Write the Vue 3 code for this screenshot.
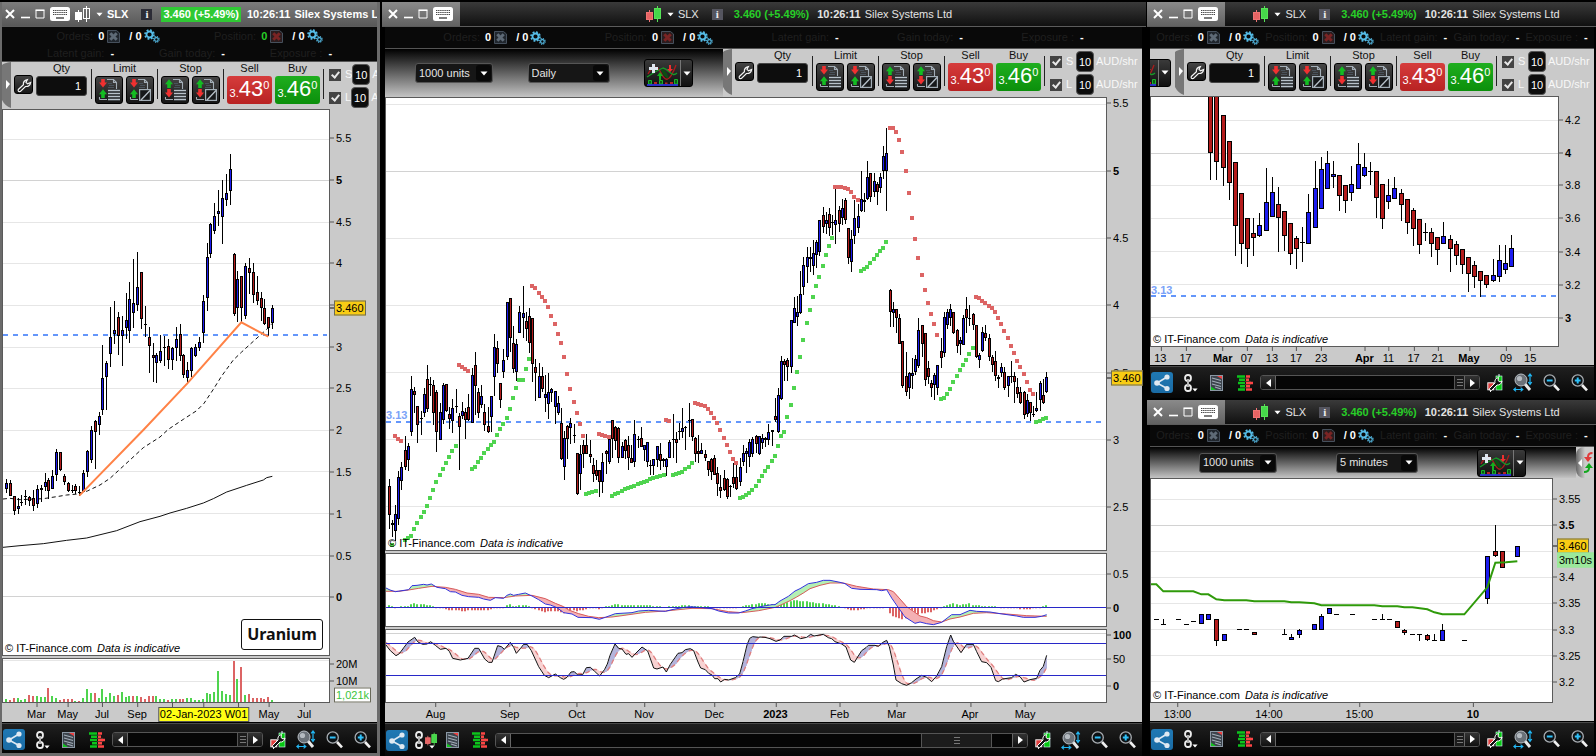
<template>
  <svg class="sprite" aria-hidden="true">
    <symbol id="close" viewBox="0 0 10 10"><path d="M1 1L9 9M9 1L1 9" stroke="#fff" stroke-width="2" /></symbol>
    <symbol id="min" viewBox="0 0 10 10"><path d="M1 8.5H10" stroke="#fff" stroke-width="1.6" /></symbol>
    <symbol id="max" viewBox="0 0 10 10"><path d="M1 1.5H9V9H1z" fill="none" stroke="#fff" /><path d="M.5 1.2H9.5" stroke="#fff" stroke-width="1.6" /></symbol>
    <symbol id="keyboard" viewBox="0 0 20 14">
      <rect width="20" height="14" rx="2.5" fill="#fff" />
      <path d="M3 3.5H17M3 5.5H17M3 7.5H17" stroke="#444" stroke-width="1.2" stroke-dasharray="1.4 .7" />
      <path d="M6 11H14" stroke="#444" stroke-width="1.4" />
    </symbol>
    <symbol id="candles" viewBox="0 0 15 16">
      <path d="M3.5 4V16" style="stroke: var(--one)" /><rect x=".5" y="6.5" width="6" height="7" style="fill: var(--one-in); stroke: var(--one)" />
      <path d="M11.5 0V16" style="stroke: var(--two)" /><rect x="8.5" y="2.5" width="6" height="10" style="fill: var(--two-in); stroke: var(--two)" />
    </symbol>
    <symbol id="caret" viewBox="0 0 8 5"><path d="M.5 .5H7.5L4 4.5z" fill="#fff" /></symbol>
    <symbol id="cancel" viewBox="0 0 13 13">
      <path d="M.5 .5H9.5L12.5 3V12.5H.5z" style="fill: var(--bg); stroke: #46505c" />
      <path d="M3.3 3.3L9.7 9.7M9.7 3.3L3.3 9.7" style="stroke: var(--x)" stroke-width="3" />
    </symbol>
    <symbol id="gears" viewBox="0 0 16 14">
      <circle cx="5.5" cy="5.5" r="3" fill="none" stroke="#56bde8" stroke-width="1.8" />
      <circle cx="5.5" cy="5.5" r="4.5" fill="none" stroke="#56bde8" stroke-width="1.6" stroke-dasharray="1.9 1.63" />
      <circle cx="12.4" cy="10.4" r="1.8" fill="none" stroke="#56bde8" stroke-width="1.1" />
      <circle cx="12.4" cy="10.4" r="2.8" fill="none" stroke="#56bde8" stroke-width="1.2" stroke-dasharray="1.2 1" />
    </symbol>
    <symbol id="wrench" viewBox="0 0 19 19">
      <path d="M3.3 13.5L8.4 8.7Q7.8 4.8 12.4 3.6L11 6.3L12.6 7.9L15.6 6.6Q15 10.8 10.4 10.5L5.4 15.5Q2.6 16.2 3.3 13.5z" fill="none" stroke="#f2f2f2" stroke-width="1.2" />
    </symbol>
    <symbol id="arrowDown" viewBox="0 0 8 9"><path d="M2.2 0H5.8V3.6H8L4 8.6L0 3.6H2.2z" fill="#f03030" /></symbol>
    <symbol id="arrowUp" viewBox="0 0 8 9"><path d="M2.2 9H5.8V5.2H8L4 .2L0 5.2H2.2z" fill="#14bc22" /></symbol>
    <symbol id="paper" viewBox="0 0 28 28">
      <path d="M12 3.5H18.5L21.5 6.5V13M18.5 3.5V6.5H21.5M4.5 23.5H12M4.5 23.5V21" fill="none" stroke="#a2adb6" stroke-width="1.1" />
      <path d="M13 7.5H17M14 9.5H19M13 11.5H19" stroke="#4a535c" />
    </symbol>
    <symbol id="list" viewBox="0 0 12 12"><rect width="12" height="12" fill="#1c1f22" /><path d="M0 1.5H12M0 4.5H12M0 7.5H12M0 10.5H12" stroke="#b8c2ca" stroke-width="1.6" /></symbol>
    <symbol id="slope" viewBox="0 0 12 12"><rect x=".6" y=".6" width="10.8" height="10.8" fill="#16181a" stroke="#a2adb6" stroke-width="1.2" /><path d="M2 11L11 1.5" stroke="#b8c2ca" stroke-width="1.3" /></symbol>
    <symbol id="indicator" viewBox="0 0 35 28">
      <path d="M3 14C8 5 12 5 16 13S24 24 31 5" fill="none" stroke="#a81c1c" stroke-width="1.4" />
      <path d="M2 17C9 12 13 10 18 8C24 9 27 18 32 13" fill="none" stroke="#159a28" stroke-width="1.3" />
      <path d="M16 10C19 9 21 11 24 18C20 19 18 14 16 10z" fill="#0c4d12" />
      <path d="M14 20V16H12L15 12L18 16H16V20z" fill="#12b21e" />
      <path d="M24 5H26V9H28L25 12L22 9H24z" fill="#ee3030" />
      <path d="M7 4H10V7H13V10H10V13H7V10H4V7H7z" fill="#dfe6ef" />
      <path d="M3.5 20.5H6.5V24H3.5zM14.5 20.5H17.5V24H14.5zM29.5 19.5H32.5V24H29.5z" fill="#0a5c12" stroke="#19b42b" />
      <path d="M9 22H12V24H9zM20 22.5H22.5V24H20zM25 22H28V24H25z" fill="#b82222" />
      <path d="M2 25H33" stroke="#3338ff" stroke-width="1.4" />
    </symbol>
    <symbol id="share" viewBox="0 0 22 21">
      <path d="M16 5L6 11L16 16.5" fill="none" stroke="#dfe9f2" stroke-width="1.6" />
      <circle cx="16" cy="5" r="2.6" fill="#dfe9f2" /><circle cx="6" cy="11" r="2.8" fill="#dfe9f2" /><circle cx="16" cy="16.5" r="2.6" fill="#dfe9f2" />
    </symbol>
    <symbol id="chain" viewBox="0 0 8 18">
      <rect x="1.1" y="1" width="5.8" height="6" rx="2.6" fill="none" stroke="#ececec" stroke-width="1.9" />
      <rect x="1.1" y="11" width="5.8" height="6" rx="2.6" fill="none" stroke="#ececec" stroke-width="1.9" />
      <path d="M4 5V13" stroke="#b4b4b4" stroke-width="2" />
    </symbol>
    <symbol id="report" viewBox="0 0 13 16">
      <rect x=".5" y=".5" width="12" height="15" fill="#3c444d" stroke="#8b98a5" />
      <path d="M2 3L11 5.5M2 6L11 8.5M2 9L11 11.5M5 12L11 14" stroke="#a2adb8" stroke-width="1.2" />
      <path d="M7 1H12V4z" fill="#f04040" /><path d="M1 15V11.5L6 15z" fill="#12c41e" />
    </symbol>
    <symbol id="depth" viewBox="0 0 16 16">
      <path d="M0 1.5H8M2 4.8H8M1 8H8M3 11.2H8M1 14.5H8" stroke="#0cc41c" stroke-width="2.6" />
      <path d="M9 1.5H13M9 4.8H12M9 8H16M9 11.2H13M9 14.5H15" stroke="#ff4545" stroke-width="2.6" />
      <path d="M8 3.2H12M8 6.4H14M8 9.600H14M8 12.8H13" stroke="#8a4a40" stroke-width=".6" />
    </symbol>
    <symbol id="setup" viewBox="0 0 16 18">
      <rect x=".8" y="8.8" width="6" height="7" fill="#e04040" stroke="#eee" /><path d="M3.5 14V18" stroke="#eee" />
      <rect x="9" y="2" width="6" height="14" fill="#07c813" stroke="#dff" stroke-width=".6" /><path d="M12 0V3" stroke="#dff" />
      <path d="M2.5 14.5L8 9Q7 5 11.5 3.5L11 6.5L13 8L15 7Q14 11.5 10 11L4.5 16.5Q2 17 2.5 14.5z" fill="#111" stroke="#fff" />
    </symbol>
    <symbol id="fit" viewBox="0 0 20 19">
      <path d="M12 11L17 17" stroke="#e8e8e8" stroke-width="3" /><circle cx="8" cy="7" r="6" fill="#6b7178" stroke="#b8bec4" />
      <circle cx="6.5" cy="5.5" r="2.6" fill="#b4bac0" />
      <path d="M17 2V10M15.2 3.4L17 1L18.8 3.4M15.2 9L17 11.4L18.8 9M1 16.5H9M3 14.6L.8 16.5L3 18.4M7.6 14.6L9.8 16.5L7.6 18.4" fill="none" stroke="#22b7f4" stroke-width="1.2" />
    </symbol>
    <symbol id="minus" viewBox="0 0 18 18">
      <path d="M11 11L16 16.4" stroke="#f0f0f0" stroke-width="2.6" /><circle cx="6.7" cy="6.5" r="5.6" fill="#0c1114" stroke="#a8adb2" stroke-width="1.3" />
      <path d="M3.8 6.5H9.6" stroke="#2fc0f8" stroke-width="2" />
    </symbol>
    <symbol id="plus" viewBox="0 0 18 18">
      <path d="M11 11L16 16.4" stroke="#f0f0f0" stroke-width="2.6" /><circle cx="6.7" cy="6.5" r="5.6" fill="#0c1114" stroke="#a8adb2" stroke-width="1.3" />
      <path d="M3.8 6.5H9.6M6.7 3.6V9.4" stroke="#2fc0f8" stroke-width="2" />
    </symbol>
    <symbol id="swap" viewBox="0 0 9 21">
      <path d="M8.5 1Q4 1 4 5" fill="none" stroke="#e03c3c" stroke-width="2" /><path d="M0 5H8L4 10z" fill="#e03c3c" />
      <path d="M0 20Q5 20 5 16" fill="none" stroke="#12a81e" stroke-width="2" /><path d="M1 16H9L5 11z" fill="#12a81e" />
    </symbol>
  </svg>

  <main class="desk">
    <div v-for="(column, c) in columns" :key="c" class="column" :class="'column-' + c">
      <section v-for="win in column" :key="win.id" class="window" :class="win.id">
        <!-- title bar -->
        <header class="title">
          <div class="controls">
            <button aria-label="Close"><svg width="10" height="10"><use href="#close" /></svg></button>
            <button aria-label="Minimize"><svg width="10" height="10"><use href="#min" /></svg></button>
            <button aria-label="Maximize"><svg width="10" height="10"><use href="#max" /></svg></button>
            <button aria-label="Keyboard"><svg width="20" height="14"><use href="#keyboard" /></svg></button>
          </div>
          <div class="head">
            <svg class="symbol-icon" width="15" height="16"><use href="#candles" /></svg>
            <svg class="caret" width="7" height="5"><use href="#caret" /></svg>
            <span class="ticker">SLX</span>
            <b class="about">i</b>
            <b class="quote">3.460 (+5.49%)</b>
            <b class="clock">10:26:11</b>
            <span class="company">Silex Systems Ltd</span>
          </div>
        </header>

        <div class="body">
          <!-- orders / position summary -->
          <div class="info">
            <div class="info-row">
              <div v-for="name in ['Orders', 'Position']" :key="name" class="stat" :class="name.toLowerCase()">
                <span class="dim">{{ name }}:</span>
                <b class="count">0</b>
                <svg width="13" height="13"><use href="#cancel" /></svg>
                <b class="auto">/ 0</b>
                <svg width="16" height="14"><use href="#gears" /></svg>
              </div>
            </div>
            <div class="info-row">
              <div v-for="name in ['Latent gain:', 'Gain today:', 'Exposure :']" :key="name" class="stat">
                <span class="dim">{{ name }}</span><b class="dash">-</b>
              </div>
            </div>
          </div>

          <!-- tools -->
          <div class="tools">
            <div v-if="win.indicators" class="chart-tools">
              <template v-if="win.period">
                <span class="pick units">
                  <select :aria-label="'Units ' + win.id"><option>1000 units</option></select>
                  <i><svg width="8" height="5"><use href="#caret" /></svg></i>
                </span>
                <span class="pick period">
                  <select :aria-label="'Period ' + win.id"><option>{{ win.period }}</option></select>
                  <i><svg width="8" height="5"><use href="#caret" /></svg></i>
                </span>
              </template>
              <div class="add">
                <button aria-label="Add indicator"><svg width="35" height="28"><use href="#indicator" /></svg></button>
                <button aria-label="Indicator list"><svg width="8" height="5"><use href="#caret" /></svg></button>
              </div>
            </div>
            <div v-if="win.orders" class="order">
              <div class="notch"><svg width="12" height="46"><path d="M0 3Q2 1 9 0V46Q3 44 0 38z" fill="#777" /><path d="M4 18L8 22L4 27z" fill="#fff" /></svg></div>
              <button class="dark wrench" aria-label="Settings"><svg width="19" height="19"><use href="#wrench" /></svg></button>
              <div class="field qty-field">
                <label :for="'qty-' + win.id">Qty</label>
                <input :id="'qty-' + win.id" class="qty" value="1" />
              </div>
              <hr />
              <template v-for="kind in ['Limit', 'Stop']" :key="kind">
                <div class="field">
                  <span>{{ kind }}</span>
                  <div class="pair">
                    <button v-for="shape in ['list', 'slope']" :key="shape" class="dark" :aria-label="kind + ' ' + shape">
                      <svg width="26" height="26" viewBox="1 1 26 26">
                        <use href="#paper" width="28" height="28" />
                        <use :href="kind === 'Limit' ? '#arrowDown' : '#arrowUp'" x="4" y="3" width="8" height="9" />
                        <use :href="kind === 'Limit' ? '#arrowUp' : '#arrowDown'" x="4" y="13" width="8" height="9" />
                        <use :href="'#' + shape" x="13" y="13" width="12" height="12" />
                      </svg>
                    </button>
                  </div>
                </div>
                <hr />
              </template>
              <div class="field">
                <span>Sell</span>
                <button class="deal sell"><small>3.</small>43<sup>0</sup></button>
              </div>
              <div class="field buy-field">
                <span>Buy</span>
                <button class="deal buy"><small>3.</small>46<sup>0</sup></button>
              </div>
              <hr />
              <div class="stops">
                <div v-for="side in ['S', 'L']" :key="side" class="stop">
                  <input :id="side + win.id" type="checkbox" checked />
                  <label :for="side + win.id">{{ side }}</label>
                  <input class="dist" value="10" :aria-label="side + ' distance'" />
                  <span>AUD/shr</span>
                </div>
              </div>
            </div>
            <button v-else class="unfold" aria-label="Show order panel">
              <svg width="6" height="8"><path d="M5 0V8L1 4z" fill="#fff" /></svg>
              <svg width="9" height="21"><use href="#swap" /></svg>
            </button>
          </div>

          <!-- charts -->
          <div class="charts">
            <template v-for="(plot, p) in win.plots" :key="p">
              <div class="plot">
                <svg width="100%" :height="plot.box[3] / 3" :viewBox="plot.box.join(' ')" preserveAspectRatio="none">
                  <path v-for="m in plot.marks" :key="m[0]" :d="`M${plot.box[0]} ${middle(m[0])}h${plot.box[2]}`" class="grid" :class="{ strong: m[2] }" />
                  <path v-for="(s, i) in plot.shapes" :key="i" :d="s.d" :class="s.cls" />
                  <path v-if="plot.level" :d="`M${plot.box[0]} ${plot.level}h${plot.box[2] - 6}`" class="level" />
                  <template v-if="plot.candles">
                    <path :d="plot.candles.wick" class="wick" />
                    <path :d="plot.candles.up" class="up" />
                    <path :d="plot.candles.down" class="down" />
                    <path :d="plot.candles.flat" class="flat" />
                  </template>
                  <path v-for="(s, i) in plot.over" :key="'o' + i" :d="s.d" :class="s.cls" />
                </svg>
                <span v-if="plot.note" class="level-note" :style="{ top: share(plot.note, plot.box, 1) }">3.13</span>
                <div v-if="p === 0" class="credit">© IT-Finance.com <em>Data is indicative</em></div>
                <div v-if="plot.stamp" class="stamp">{{ plot.stamp }}</div>
              </div>
              <div class="scale">
                <span v-for="m in plot.marks.filter((k) => k[1])" :key="m[0]" class="mark" :class="{ strong: m[2] }" :style="{ top: `max(6px, ${share(m[0], plot.box, 1)})` }">{{ m[1] }}</span>
                <span v-for="t in plot.tags" :key="t[1]" class="mark tag" :class="t[2]" :style="{ top: share(t[0], plot.box, 1) }">{{ t[1] }}</span>
              </div>
            </template>
            <div class="dates">
              <span v-for="d in win.dates" :key="d[0]" class="date" :class="d[2]" :style="{ left: share(d[0], win.plots[0].box, 0) }">{{ d[1] }}</span>
            </div>
          </div>

          <!-- bottom bar -->
          <footer class="bar">
            <button class="share" aria-label="Share"><svg width="22" height="21"><use href="#share" /></svg></button>
            <button class="link" aria-label="Link windows">
              <svg width="8" height="18"><use href="#chain" /></svg>
              <svg v-if="win.linked" class="symbol-icon" width="12" height="16"><use href="#candles" /></svg>
              <svg class="tiny" width="6" height="4"><use href="#caret" /></svg>
            </button>
            <button class="report" aria-label="Report"><svg width="13" height="16"><use href="#report" /></svg></button>
            <button class="depth" aria-label="Depth"><svg width="16" height="16"><use href="#depth" /></svg></button>
            <div class="scroll">
              <button aria-label="Back"><svg width="5" height="8"><path d="M5 0V8L0 4z" fill="#fff" /></svg></button>
              <span class="track"><span class="thumb" :class="{ wide: win.linked }"><i></i></span></span>
              <button aria-label="Forward"><svg width="5" height="8"><path d="M0 0V8L5 4z" fill="#fff" /></svg></button>
            </div>
            <button aria-label="Chart settings"><svg width="16" height="18"><use href="#setup" /></svg></button>
            <button aria-label="Fit"><svg width="20" height="19"><use href="#fit" /></svg></button>
            <button aria-label="Zoom out"><svg width="18" height="18"><use href="#minus" /></svg></button>
            <button aria-label="Zoom in"><svg width="18" height="18"><use href="#plus" /></svg></button>
          </footer>
        </div>
      </section>
    </div>
  </main>
</template>

<script setup>
// all plot coordinates are in thirds of a pixel
const snap = (v) => Math.round(v / 3) * 3;
const middle = (v) => Math.floor(v / 3) * 3 + 1.5;

// "x high top bottom low kind", kind is u (up), d (down) or n (flat)
const rows = (text, dx = 0, dy = 0) =>
  text.trim().split(/[\n;]+/).filter((t) => t.trim()).map((t) => {
    const [x, hi, top, bot, lo, kind] = t.trim().split(' ');
    return { x: middle(x) + dx, hi: +hi + dy, top: +top + dy, bot: +bot + dy, lo: +lo + dy, kind };
  });

const candles = (list, half = 3) => {
  const out = { wick: '', up: '', down: '', flat: '' };
  list.forEach((k) => {
    out.wick += `M${k.x} ${snap(k.hi)}V${snap(k.lo)}`;
    const top = snap(k.top);
    if (k.kind === 'n') {
      out.flat += `M${k.x - half - 1.5} ${top + 1.5}h${half * 2 + 3}`;
      return;
    }
    const height = Math.max(snap(k.bot) - top - 3, 3);
    out[k.kind === 'u' ? 'up' : 'down'] += `M${k.x - half} ${top + 1.5}h${half * 2}v${height}h${-half * 2}z`;
  });
  return out;
};

const points = (text, dx = 0, dy = 0) =>
  text.trim().split(/\s+/).map((t) => {
    const [x, y] = t.split(',');
    return [+x + dx, +y + dy];
  });
const line = (pts) => 'M' + pts.map((p) => p.join(' ')).join('L');
const dots = (pts) => pts.map(([x, y]) => `M${snap(x) - 6} ${snap(y) - 6}h12v12h-12z`).join('');

// linear interpolation inside a curve
const at = (pts, x) => {
  if (x <= pts[0][0]) return pts[0][1];
  for (let i = 1; i < pts.length; i++) {
    if (x <= pts[i][0]) {
      const [x0, y0] = pts[i - 1];
      const [x1, y1] = pts[i];
      return y0 + ((y1 - y0) * (x - x0)) / (x1 - x0 || 1);
    }
  }
  return pts[pts.length - 1][1];
};

// area between two curves, split by which one is higher
const between = (a, b, end) => {
  const out = ['', ''];
  for (let x = 12; x < end; x += 3) {
    const ya = at(a, x);
    const yb = at(b, x);
    out[ya < yb ? 0 : 1] += `M${x} ${ya.toFixed(1)}h3V${yb.toFixed(1)}h-3z`;
  }
  return out;
};

const share = (v, box, axis) => ((v - box[axis]) / box[axis + 2]) * 100 + '%';

/* weekly */
const weekly = [
  ...rows(`
19 162 175 191 203 u;31 165 175 212 214 d;43 213 213 258 269 d;55 218 243 253 266 u;64 210 231 236 242 n;76 194 214 218 240 n
88 213 216 228 242 d;100 196 220 242 258 d;112 180 192 236 250 u;124 180 189 195 232 u;136 144 171 186 198 u;145 160 165 197 222 d
157 135 153 191 192 u;169 72 80 149 167 u;181 80 82 135 138 d;193 147 153 170 179 d;205 171 175 197 200 d;217 180 195 197 204 n
226 178 184 198 207 d;238 182 200 203 212 n;250 135 144 200 200 u;262 75 78 140 156 u;274 3 15 104 115 u;286 -15 -12 22 131 d`, 0, 975),
  ...rows(`
298 936 948 974 1005 u;307 735 834 930 945 u;319 783 789 830 930 u;331 620 711 762 800 u;343 603 690 703 732 u;355 636 651 708 765 d
367 648 690 707 798 u;379 578 660 684 717 u;388 546 597 692 728 u;400 477 609 639 684 u;412 456 561 615 633 u;424 516 516 656 687 d
436 618 672 675 711 n;448 681 711 738 820 d;460 729 765 774 845 d;469 759 765 789 848 u;481 705 753 783 789 u;493 708 741 744 797 n
505 717 738 780 807 d;517 741 744 780 810 u;529 681 717 743 784 u;541 672 702 767 782 d;550 762 765 825 833 d;562 786 810 833 848 u
574 741 744 813 831 u;586 732 741 767 772 u;598 711 726 743 753 u;610 585 603 699 729 u;622 429 471 594 633 u;631 368 372 462 474 u
643 309 348 393 402 u;655 270 333 342 378 u;667 240 294 351 432 u;679 222 279 300 318 u;691 162 207 273 315 u;703 459 462 641 648 d
712 513 537 624 666 u;724 528 528 624 666 d;736 489 498 648 657 u;748 474 504 519 582 d;760 489 516 585 609 d;772 528 576 603 615 d
784 576 594 624 663 d;793 596 624 672 675 d;805 650 651 684 708 d;817 615 624 669 687 u`),
];
const average = points('9,1197 30,1195 60,1199 130,1196 170,1190 200,1185 235,1182 262,1173 300,1155 330,1135 355,1112 390,1080 430,1043 480,1011 505,988 550,958 590,932 612,910 640,868 665,828 700,780 725,756 760,724 800,688 817,670');
const slow = points('9,367 60,362 130,356 200,346 260,339 350,317 420,290 480,274 510,264 560,250 610,234 640,221 680,201 740,181 790,165 800,158 817,154', 0, 975);
const trend = points('238,1187 430,990 562,850 724,667 805,710');

const volume = `18,822g 30,825r 42,819r 54,819g 64,825g 75,822g 87,810r 99,813r 111,813g 124,816g 135,816g 144,789r 157,813g 169,819g 181,825r 193,822r
205,822r 217,822r 226,828g 238,828r 250,819g 261,792g 273,804g 285,804r 297,819g 306,792g 319,816g 330,804g 342,813g 354,810r 366,801g 378,816g
388,813g 400,813r 411,813g 424,816r 436,822r 448,813r 460,813r 469,813g 481,822g 492,822g 504,825r 516,822g 529,822g 541,822r 550,822r 562,819g
574,819g 586,825g 598,825g 610,822g 621,804g 630,807g 642,801g 654,738g 666,798g 678,807g 690,810g 702,708r 711,762g 723,726r 735,810g 747,807r
759,819r 771,819r 783,819r 793,822r 804,816r 817,825g`.split(/\s+/);
const volumeBars = (color) =>
  volume.filter((v) => v.endsWith(color)).map((v) => {
    const [x, y] = v.slice(0, -1).split(',');
    return `M${snap(+x) - 3} ${y}h6V831h-6z`;
  }).join('');

/* daily */
const daily = [
  ...rows(`
22 717 739 824 866 d;31 840 848 854 890 d;40 795 822 872 903 u;49 693 711 836 854 u;58 666 680 723 750 u;70 588 630 680 690 d
79 609 618 659 692 u;88 408 447 575 587 u;97 441 453 464 518 d;106 498 498 554 608 d;118 513 535 539 585 n;127 444 462 518 530 u
136 375 417 506 515 d;145 410 432 435 467 n;154 420 436 518 555 d;163 450 455 575 635 d;175 489 517 599 599 u;184 430 436 539 551 u
193 432 433 513 515 d;202 500 523 538 566 d;211 477 505 543 578 u;223 447 498 502 518 n;232 520 528 560 690 d;241 485 514 528 538 u
250 505 516 540 597 d;259 462 502 540 543 d;271 384 405 548 548 u;280 336 376 438 524 d;289 445 457 518 535 d;298 435 469 494 503 u
307 491 517 555 573 d;319 502 558 575 579 d;328 467 469 530 576 u;337 283 322 412 467 u;346 304 325 371 400 d;355 429 430 479 503 d
364 327 361 395 413 u;376 185 187 352 360 u;385 174 175 293 337 d;394 258 310 388 398 d;403 298 313 395 423 u;412 199 217 278 278 u
424 138 220 233 293 u;433 217 244 266 302 d;442 205 229 310 338 d;451 233 235 373 425 d;460 358 382 398 483 d;472 368 409 475 475 u
481 380 409 446 457 d;490 406 462 475 515 u;499 399 457 491 536 u;508 444 447 459 487 u;520 453 454 500 551 u;529 468 490 518 524 u
538 503 549 656 659 d;547 572 595 680 719 u;556 555 558 598 657 d;565 534 548 563 611 u;577 552 586 590 608 n;586 640 640 761 764 d
595 614 643 701 750 u;604 600 616 641 683 d;613 583 616 641 643 d;625 600 641 652 668 d;634 655 675 701 727 d;643 660 691 707 719 d
652 690 690 727 770 d;661 640 667 727 758 u;673 629 634 641 701 d;682 595 598 665 672 u;691 541 541 598 655 d;700 558 560 602 629 d
709 560 565 655 668 d;721 605 619 655 655 u;730 598 601 632 656 d;739 589 616 653 690 d;748 614 653 668 669 d;757 541 583 665 680 u
769 587 598 601 623 n;778 562 595 620 621 d;787 614 615 629 662 u;796 605 607 665 680 u;805 660 676 680 704 n;814 658 658 677 704 u
826 618 618 660 680 u;835 610 643 664 690 d;844 655 658 664 680 d;853 655 658 680 707 u;862 600 606 654 655 u;874 522 597 600 655 n
883 575 598 608 668 d;892 550 573 577 600 n;901 503 563 577 595 u;910 558 560 564 629 n;922 489 540 543 590 n;931 536 537 590 602 d
940 592 595 643 665 d;949 585 632 641 668 d;958 610 631 641 641 u;970 630 641 653 662 d;979 662 664 690 707 d;988 653 656 695 719 d
997 645 655 704 704 d;1006 680 700 731 767 d;1015 704 740 752 773 d;1027 690 715 749 752 d;1036 715 716 770 776 d;1045 735 737 740 770 n
1054 670 711 731 745 d;1063 675 712 748 749 d;1075 655 680 727 738 u;1084 615 640 665 678 u;1093 625 632 641 700 u;1102 597 606 652 680 u
1111 590 597 641 652 u;1123 585 589 613 640 d;1132 587 589 641 645 u`, 0, 420),
  ...rows(`
7 1003 1015 1030 1047 u;16 1010 1014 1021 1040 d;25 973 996 1021 1034 u;37 990 991 997 1037 d;46 895 948 960 967 d;55 863 886 997 998 u
64 768 784 898 900 u;73 778 784 796 842 d;82 775 781 802 843 d;94 660 661 802 820 u;103 591 625 668 670 u;112 588 637 650 678 u
121 514 583 638 642 u;130 471 496 562 586 u;142 441 472 502 550 u;151 440 472 478 516 u;160 420 460 497 525 u;169 420 427 464 503 u
178 360 361 455 467 u;190 320 346 380 398 d;199 335 361 373 403 u;208 324 343 385 408 d;217 345 367 371 405 n;226 262 361 374 432 u
238 318 331 373 395 d;247 298 325 355 375 u;256 294 301 361 372 d;265 384 385 473 492 d;274 390 418 485 516 u;283 300 355 409 432 u
295 313 349 385 400 u;304 213 298 334 335 u;313 280 300 307 335 u;322 183 232 296 300 u;331 220 220 290 307 d;343 220 244 275 290 u
352 245 253 275 315 d;361 218 232 263 280 u;370 138 169 214 237 u;379 84 160 214 333 u;391 567 571 637 682 d;400 607 628 638 682 u
409 627 628 654 700 d;418 642 655 731 731 d;427 722 724 857 865 d;439 757 829 875 887 d;448 815 820 865 897 u;457 775 820 829 868 u
466 765 778 815 825 u;475 655 691 797 803 u;487 675 676 731 772 d;496 699 700 839 857 d;505 784 805 830 852 d;514 840 850 865 890 d
523 818 826 854 900 u;532 795 796 865 885 u;544 714 753 773 804 d;553 636 652 758 770 u;562 627 637 674 686 u;571 612 628 653 679 u
580 635 637 700 702 d;592 687 690 737 758 d;601 712 721 733 765 u;610 646 655 734 735 u;619 590 628 655 699 d;628 615 655 658 678 n
640 640 643 674 690 d;649 676 676 770 773 d;658 758 766 779 804 u;667 680 697 754 755 u;676 676 700 713 723 d;688 702 715 770 782 d
697 765 772 794 815 d;706 754 784 827 844 d;715 824 832 838 863 u;724 790 802 818 830 u;733 800 815 863 870 d;745 828 829 857 890 u
754 783 829 832 848 n;763 815 829 845 909 d;772 834 862 883 893 d;781 860 877 908 911 d;793 873 877 944 957 d;802 883 901 943 950 u
811 905 907 938 963 d;820 917 943 947 950 n;829 876 925 932 935 u;841 842 850 899 933 u;850 838 886 908 912 d;859 816 832 875 880 u`, 1134),
];
const sarDown = [
  ...points(`39,588 48,597 57,603 231,375 240,381 249,387 258,393 450,138 459,144 471,159 480,171 489,183 498,201 507,228 519,252 528,282 537,309
546,351 555,402 564,447 576,486 585,519 594,552 603,588 651,582 660,585 669,588 681,591 852,540 861,543 939,489 948,492 957,495 969,498 978,507
987,519 996,534 1005,549 1014,570 1026,594 1035,615 1044,636 1053,657 1062,669`, 0, 420),
  ...points(`225,261 234,261 243,261 255,264 264,267 273,276 282,291 294,300 390,84 399,84 408,96 417,120 426,156 438,213 447,279 456,354 465,417
474,474 486,525 495,570 504,609 513,642 522,672 531,705 648,591 657,594 666,603 675,609 687,618 696,624 705,636 714,654 723,672 732,693 744,714
753,738 762,759 771,783 780,801 792,822 801,846 810,870 819,882`, 1134),
];
const sarUp = [
  ...points(`30,916 69,900 78,894 87,888 96,867 105,849 117,831 126,816 135,798 144,774 153,750 162,726 174,705 183,687 192,669 201,651 210,633 222,618
270,687 279,681 288,666 297,654 306,639 318,627 327,615 336,606 345,585 354,567 363,552 375,534 384,507 393,474 402,444 411,420 423,420 432,387
441,357 612,762 621,760 630,756 642,753 690,768 699,762 708,759 720,753 729,748 738,744 747,741 756,737 768,732 777,729 786,726 795,722 804,717
813,714 825,711 834,708 846,705 873,705 882,702 891,699 900,696 909,687 921,681 930,669 1074,774 1083,771 1092,765 1101,759 1110,750 1122,738
1131,723 1140,708`, 0, 420),
  ...points(`15,1113 24,1101 36,1083 45,1068 54,1038 63,1008 72,996 81,951 93,915 102,864 111,816 120,771 129,720 141,669 150,630 159,591 168,558
177,531 189,498 198,465 207,438 216,414 303,513 312,507 321,501 330,489 342,477 351,465 360,453 369,444 378,426 543,897 552,894 561,882 570,867
579,846 591,828 600,810 609,795 618,780 627,762 639,744 828,966 840,963 849,957 858,954`, 1134),
];

const macd = [
  ...points(`12,144 24,150 40,155 60,152 80,149 90,137 105,136 125,133 135,135 148,132 165,142 190,146 205,155 220,156 240,166 260,170 290,172 305,177
325,181 340,173 365,175 375,166 385,162 395,166 410,163 430,159 450,168 470,179 490,192 505,195 525,203 545,218 570,222 588,232 630,233 652,238
670,232 700,221 750,218 770,213 800,211 850,214 870,209 900,203 925,200 960,203 990,206 1010,213 1040,219 1070,219 1090,213 1110,206 1140,199 1170,194`),
  ...points(`45,314 60,303 85,289 105,273 120,266 145,251 170,247 190,241 210,241 240,247 255,251 275,265 300,268 350,269 365,272 380,269 395,294
415,323 435,351 465,370 480,366 500,371 520,374 545,367 575,344 600,344 630,331 650,334 690,336 720,341 770,348 790,352 825,352 845,349 860,344`, 1134, -120),
];
const signal = [
  ...points(`12,154 50,154 80,150 110,145 150,139 190,142 220,148 255,159 290,163 320,172 365,173 400,168 450,166 490,176 520,190 545,200 560,210
590,221 620,229 650,233 690,231 720,227 790,217 850,213 930,205 990,206 1040,215 1080,218 1130,212 1180,202`),
  ...points(`60,316 90,302 110,291 130,279 150,266 180,256 210,249 250,249 290,259 340,267 385,269 400,275 420,297 440,320 460,334 480,348 500,353
520,362 545,366 570,357 600,351 640,340 680,338 740,342 800,347 860,349`, 1134, -120),
];
const histogram = (positive) =>
  daily.map(({ x }) => {
    const d = at(signal, x) - at(macd, x);
    return d > 0 === positive && Math.abs(d) > 0.5 ? `M${x - 4.5} 202h6V${202 - Math.sign(d) * Math.max(snap(Math.abs(d)), 3)}h-6z` : '';
  }).join('');
const macdArea = between(macd, signal, 1994);

const fast = [
  ...points(`12,315 25,332 42,347 52,341 78,306 98,292 108,306 122,313 135,312 146,305 160,316 175,328 192,325 202,334 212,355 235,360 258,355 278,325
290,325 308,357 320,367 330,367 347,317 358,320 367,328 385,307 395,322 403,340 415,326 425,313 435,313 448,332 470,380 487,406 500,413 520,402
535,413 545,418 555,412 567,396 577,395 587,405 602,404 613,383 625,382 637,393 653,408 668,388 676,372 684,346 699,312 710,325 720,327 732,343
740,341 750,352 762,339 780,321 797,333 815,384 825,387 843,381 853,396 865,373 888,340 900,338 910,329 925,326 935,332 948,366 956,384 970,389
980,400 990,405 998,416 1008,416 1016,426 1028,418 1040,420 1060,413 1073,402 1083,365 1095,315 1103,295 1112,290 1130,292`),
  ...points(`0,411 15,412 30,416 48,424 60,420 72,409 95,409 103,405 122,416 140,412 152,403 162,408 190,403 205,413 215,416 225,425 245,432 258,441
272,480 283,487 305,452 318,443 325,436 345,436 355,439 367,428 380,421 388,440 400,495 408,540 425,551 440,556 455,548 468,537 485,526 500,532
515,545 530,528 545,500 560,440 572,405 580,424 603,458 620,433 640,433 650,455 665,485 680,488 693,502 707,542 715,545 728,537 755,533 767,523
780,530 792,546 810,539 830,535 840,511 850,499 860,466`, 1134, -120),
];
const before = [[-40, 290], ...fast];
const smooth = [];
for (let x = 12; x <= 1994; x += 6) {
  smooth.push([x, (at(before, x) + at(before, x - 10) + at(before, x - 20) + at(before, x - 30)) / 4]);
}
const fastArea = between(fast, smooth, 1994);

/* four hours */
const recent = rows(`
193 285 285 458 540 d;211 285 285 487 540 d;232 346 346 503 558 d;250 423 424 550 600 d;268 487 487 677 768 d;286 580 580 731 792 d
304 655 655 746 801 d;322 655 700 713 768 d;340 640 676 707 711 u;361 504 607 692 692 u;379 531 577 650 650 u;397 561 613 653 756 d
415 634 634 707 753 d;433 670 670 761 795 d;451 709 715 746 807 d;469 681 727 730 786 n;487 582 637 731 731 u;508 483 565 683 684 u
526 471 508 626 626 u;544 453 490 566 566 u;562 483 523 530 564 u;580 525 526 587 633 d;598 555 556 602 639 d;616 498 553 578 603 u
637 429 493 566 566 u;655 459 502 529 530 u;673 486 513 516 555 n;691 513 514 593 654 d;709 552 553 656 687 d;727 537 586 605 627 u
745 531 565 596 597 u;766 567 580 614 663 d;784 597 598 668 702 d;802 624 631 686 738 d;820 657 658 734 762 d;838 669 696 699 723 n
856 684 697 731 771 d;874 711 712 749 795 d;892 666 709 731 732 u;913 705 718 746 816 d;931 724 733 767 795 d;949 747 748 794 822 d
967 771 772 821 876 d;985 784 796 830 864 d;1003 813 814 842 890 d;1021 825 826 854 864 d;1042 777 826 842 846 u;1060 735 781 832 846 u
1078 735 790 809 822 u;1096 705 745 800 800 u`);

/* five minutes */
const intraday = rows(`
31 736 736 739 739 n;52 735 750 753 753 n;97 736 736 739 739 n;121 750 750 753 753 n;142 741 741 744 744 n;166 720 721 751 751 u
187 720 721 737 737 u;211 736 736 800 816 d;235 780 781 800 800 u;280 765 765 768 768 n;301 765 765 768 768 n;325 774 775 782 783 d
415 765 780 783 783 n;436 780 790 799 799 u;460 766 767 782 792 u;505 750 751 767 767 u;526 720 727 767 767 u;550 702 703 721 721 u
571 720 720 723 723 n;619 720 720 723 723 n;685 735 735 738 738 n;709 720 735 738 738 n;730 735 735 738 738 n;754 741 742 761 762 d
775 765 767 776 783 d;799 780 780 783 783 n;820 780 780 783 800 n;844 780 782 799 800 d;865 780 798 801 801 n;889 750 767 800 800 u
955 798 798 801 801 n;1024 546 547 674 689 u;1048 453 532 547 548 d;1069 531 532 581 582 d;1114 516 517 548 548 u`);
const vwap = points(`15,631 31,631 52,652 142,652 166,661 187,661 211,676 235,679 301,679 325,682 415,682 436,685 460,685 505,688 526,694 685,694
709,697 754,697 775,700 799,700 844,706 865,715 889,721 955,721 1024,640 1048,566 1080,565 1114,562`);

const columns = [
  [
    {
      id: 'weekly',
      orders: true,
      plots: [
        {
          box: [9, 30, 978, 1635],
          marks: [[118, '5.5'], [241, '5', 1], [367, '4.5'], [490, '4'], [616, '3.5'], [742, '3'], [865, '2.5'], [990, '2'], [1114, '1.5'], [1240, '1'], [1366, '0.5'], [1489, '0', 1]],
          tags: [[625, '3.460', 'last']],
          level: 705,
          candles: candles(weekly),
          shapes: [{ d: line(average), cls: 'average' }, { d: line(slow), cls: 'slow' }],
          over: [{ d: line(trend), cls: 'trend' }],
          stamp: 'Uranium',
        },
        {
          box: [9, 702, 978, 129],
          marks: [[706, '20M'], [769, '10M']],
          tags: [[808, '1,021k', 'vol']],
          shapes: [{ d: volumeBars('g'), cls: 'green' }, { d: volumeBars('r'), cls: 'red' }],
        },
      ],
      dates: [[112, 'Mar'], [205, 'May'], [307, 'Jul'], [412, 'Sep'], [517, ''], [712, ''], [610, '02-Jan-2023 W01', 'picked'], [805, 'May'], [910, 'Jul']],
    },
  ],
  [
    {
      id: 'daily',
      orders: true,
      indicators: true,
      period: 'Daily',
      linked: true,
      plots: [
        {
          box: [12, -6, 2160, 1356],
          marks: [[13, '5.5'], [214, '5', 1], [415, '4.5'], [616, '4'], [817, '3.5'], [1018, '3'], [1219, '2.5']],
          tags: [[832, '3.460', 'last']],
          level: 966,
          note: 946,
          candles: candles(daily),
          over: [{ d: dots(sarDown), cls: 'red' }, { d: dots(sarUp), cls: 'green' }],
        },
        {
          box: [12, 42, 2160, 216],
          marks: [[103, '0.5'], [202, '0', 1]],
          shapes: [
            { d: histogram(true), cls: 'green' },
            { d: histogram(false), cls: 'red' },
            { d: macdArea[0], cls: 'area-up' },
            { d: macdArea[1], cls: 'area-down' },
            { d: line(signal), cls: 'signal' },
            { d: line(macd), cls: 'macd' },
            { d: `M12 ${middle(202)}h2160`, cls: 'bound' },
          ],
        },
        {
          box: [12, 270, 2160, 216],
          marks: [[280, '100', 1], [358, '50'], [436, '0', 1]],
          shapes: [
            { d: fastArea[0], cls: 'area-blue' },
            { d: fastArea[1], cls: 'area-pink' },
            { d: line(smooth), cls: 'smooth' },
            { d: line(fast), cls: 'slow' },
            { d: `M12 ${middle(310)}h2160M12 ${middle(406)}h2160`, cls: 'bound' },
          ],
        },
      ],
      dates: [[163, 'Aug'], [385, 'Sep'], [586, 'Oct'], [787, 'Nov'], [997, 'Dec'], [1180, '2023', 'strong'], [1372, 'Feb'], [1543, 'Mar'], [1762, 'Apr'], [1927, 'May']],
    },
  ],
  [
    {
      id: 'hours',
      orders: true,
      indicators: true,
      plots: [
        {
          box: [15, 291, 1221, 747],
          marks: [[361, '4.2'], [460, '4', 1], [556, '3.8'], [655, '3.6'], [754, '3.4'], [853, '3.2'], [952, '3', 1]],
          level: 888,
          note: 869,
          candles: candles(recent, 6),
        },
      ],
      dates: [[46, '13'], [121, '17'], [232, 'Mar', 'strong'], [304, '07'], [379, '13'], [451, '17'], [526, '23'], [655, 'Apr', 'strong'], [727, '11'], [802, '17'], [874, '21'], [967, 'May', 'strong'], [1078, '09'], [1150, '15']],
    },
    {
      id: 'minutes',
      indicators: true,
      period: '5 minutes',
      plots: [
        {
          box: [15, 315, 1203, 669],
          marks: [[376, '3.55'], [454, '3.5', 1], [532, ''], [610, '3.4'], [688, '3.35'], [766, '3.3'], [844, '3.25'], [922, '3.2']],
          tags: [[517, '3.460', 'last'], [559, '3m10s', 'left']],
          candles: candles(intraday, 6),
          over: [{ d: line(vwap), cls: 'vwap' }],
        },
      ],
      dates: [[97, '13:00'], [370, '14:00'], [640, '15:00'], [979, '10', 'strong']],
    },
  ],
];
</script>

<style>
body {
  background: #000;
}
</style>

<style scoped>
.sprite {
  position: absolute;
  width: 0;
  height: 0;
}
.desk {
  display: grid;
  grid-template-columns: 382fr 764fr 450fr;
  font-family: "Liberation Sans", Arial, sans-serif;
  font-size: 11px;
  line-height: 13px;
  color: #fff;
  background: #000;
  overflow: hidden;
}
.column {
  min-width: 0;
}
svg {
  display: block;
  flex: none;
}
button {
  padding: 0;
  border: 0;
  background: none;
  color: inherit;
  font: inherit;
  cursor: pointer;
}
input,
select {
  box-sizing: border-box;
  font: inherit;
  color: #fff;
}
.window {
  padding-top: 2px;
}
.body {
  padding: 0 4px 0 3px;
}
.column-2 .window {
  border-left: 1px solid #000;
}
.column-2 .body {
  padding-right: 2px;
}
.column-0 {
  padding-right: 2px;
}
.column-0 .window {
  padding: 2px 3px 3px 2px;
  background: linear-gradient(#000 2px, #6b6b6b 2px);
}
.column-0 .body {
  padding: 0;
}

/* title bar */
.title {
  display: flex;
  height: 24px;
  border-bottom: 1px solid #5c5c5c;
  background: linear-gradient(#3a3a3a, #101010);
  overflow: hidden;
}
.column-0 .title {
  background: linear-gradient(#7c7c7c, #585858);
}
.controls {
  display: flex;
  align-items: center;
  gap: 5px;
  box-sizing: border-box;
  width: 78px;
  padding-left: 6px;
  background: linear-gradient(#8a8a8a, #626262);
  flex: none;
}
.column-0 .controls {
  width: 73px;
  padding-left: 3px;
  background: none;
}
.head {
  flex: 1;
  display: flex;
  align-items: center;
  justify-content: center;
  min-width: 0;
  padding-right: 8px;
  white-space: nowrap;
  color: #e4e4e4;
}
.head > * {
  flex: none;
}
.column-0 .head {
  justify-content: flex-start;
  padding: 0;
  color: #fff;
}
.symbol-icon {
  --one: #f07474;
  --one-in: #e86464;
  --two: #56e456;
  --two-in: #46d84a;
}
.column-0 .head .symbol-icon {
  --one: #fff;
  --one-in: #fff;
  --two: #fff;
  --two-in: none;
}
.caret {
  margin: 0 4px 0 6px;
}
.about {
  width: 11px;
  height: 11px;
  margin: 0 11px 0 13px;
  background: #55555f;
  color: #eee;
  font-family: "Liberation Serif", serif;
  line-height: 11px;
  text-align: center;
}
.column-0 .about {
  margin-right: 9px;
  background: #2c2c36;
}
.quote {
  margin-right: 8px;
  color: #27cf27;
}
.column-0 .quote {
  margin-right: 6px;
  padding: 1px 2px;
  background: #2fc934;
  color: #fff;
}
.clock {
  margin-right: 4px;
}
.column-0 .ticker,
.column-0 .company {
  font-weight: bold;
}

/* summary */
.info {
  display: flex;
  align-items: center;
  justify-content: space-evenly;
  height: 21px;
  border-bottom: 1px solid #555;
  background: #090909;
  white-space: nowrap;
}
.info-row {
  display: contents;
}
.column-0 .info {
  flex-direction: column;
  height: 34px;
  justify-content: flex-start;
}
.column-0 .info-row {
  display: flex;
  align-items: center;
  justify-content: space-evenly;
  width: 100%;
  height: 18px;
}
.column-0 .info-row + .info-row {
  height: 16px;
}
.stat {
  display: flex;
  align-items: center;
}
.dim {
  color: #1f1f1f;
}
.count {
  margin: 0 3px 0 5px;
}
.orders {
  --bg: #20262d;
  --x: #5e6a76;
}
.position {
  --bg: #2b1d1f;
  --x: #7a2424;
}
.column-0 .position .count {
  color: #27cf27;
}
.auto {
  margin: 0 2px 0 9px;
}
.dash {
  margin-left: 6px;
}

/* tools */
.tools {
  display: flex;
  height: 48px;
  background: #cacaca;
  color: #111;
  overflow: hidden;
}
.weekly .tools,
.hours .tools {
  height: 47px;
}
.minutes .tools {
  height: 31px;
}
.chart-tools {
  flex: 1;
  display: flex;
  align-items: center;
  justify-content: space-between;
  min-width: 0;
  box-sizing: border-box;
  padding: 0 30px;
  background: linear-gradient(#000, #c4c4c4);
  overflow: hidden;
}
.hours .chart-tools {
  justify-content: flex-end;
  padding: 0 4px 0 0;
  background: #cacaca;
}
.minutes .chart-tools {
  padding: 0 50px 0 49px;
}
.pick {
  position: relative;
  height: 20px;
}
.units {
  width: 78px;
}
.period {
  width: 82px;
}
.pick select {
  width: 100%;
  height: 20px;
  padding: 0 3px;
  appearance: none;
  border: 1px solid #555;
  border-radius: 3px;
  background: #161616;
  color: #e4e4e4;
}
.pick i {
  position: absolute;
  top: 2px;
  right: 2px;
  display: grid;
  place-items: center;
  width: 15px;
  height: 16px;
  border-radius: 3px;
  background: #080808;
  pointer-events: none;
}
.add {
  flex: none;
  display: flex;
  box-sizing: border-box;
  width: 49px;
  height: 28px;
  border: 1px solid #000;
  border-radius: 3px;
  background: linear-gradient(#3a3a3a, #101010);
  overflow: hidden;
}
.add button {
  flex: none;
  display: grid;
  place-items: center;
  height: 26px;
}
.add button:last-child {
  width: 12px;
  border-left: 1px solid #777;
}
.order {
  flex: none;
  display: flex;
  align-items: flex-start;
}
.hours .order,
.daily .order {
  width: 419px;
}
.notch {
  width: 12px;
}
.dark {
  display: grid;
  place-items: center;
  box-sizing: border-box;
  width: 28px;
  height: 28px;
  border: 1px solid #000;
  border-radius: 3px;
  background: linear-gradient(#454545, #161616);
  overflow: hidden;
}
.dark.wrench {
  width: 19px;
  height: 19px;
  margin: 13px 3px 0 0;
}
.field {
  display: flex;
  flex-direction: column;
  align-items: center;
  gap: 1px;
}
.qty {
  width: 51px;
  height: 20px;
  padding: 0 5px;
  border: 1px solid #444;
  border-radius: 3px;
  background: #0d0d0d;
  text-align: right;
}
.pair {
  display: flex;
  gap: 3px;
}
.order hr {
  width: 1px;
  height: 30px;
  margin: 7px 3px 0;
  border: 0;
  background: #222;
}
.order .qty-field + hr {
  margin-left: 4px;
}
.deal {
  display: flex;
  justify-content: center;
  align-items: flex-end;
  box-sizing: border-box;
  width: 45px;
  height: 28px;
  padding-bottom: 4px;
  border-radius: 3px;
  color: #fff;
  font-size: 22px;
  line-height: 22px;
}
.deal small {
  font-size: 11px;
  line-height: 13px;
}
.deal sup {
  align-self: flex-start;
  padding-top: 3px;
  font-size: 11px;
  line-height: 13px;
}
.sell {
  background: linear-gradient(#d63c3c, #b82222);
}
.buy {
  background: linear-gradient(#1fae1f, #0b8f0b);
}
.buy-field {
  margin-left: 3px;
}
.stops {
  display: flex;
  flex-direction: column;
  gap: 2px;
  padding: 2px 0 0 2px;
}
.weekly .stops {
  width: 49px;
  overflow: hidden;
}
.stop {
  display: flex;
  align-items: center;
  color: #f8f8f8;
}
.stop label {
  width: 10px;
  margin-left: 4px;
}
.stop input[type="checkbox"] {
  flex: none;
  appearance: none;
  width: 12px;
  height: 12px;
  margin: 0;
  background: #444;
}
.stop input[type="checkbox"]:checked::before {
  content: "";
  display: block;
  width: 3px;
  height: 6px;
  margin: 1px 0 0 4px;
  border: solid #e8e8e8;
  border-width: 0 2px 2px 0;
  transform: rotate(40deg);
}
.stop .dist {
  flex: none;
  width: 18px;
  height: 21px;
  margin-right: 2px;
  padding: 0;
  border: 1px solid #555;
  border-radius: 4px;
  background: #0d0d0d;
  text-align: center;
}
.unfold {
  flex: none;
  display: flex;
  align-items: center;
  gap: 1px;
  width: 18px;
  height: 31px;
  padding-left: 1px;
  border-radius: 8px 0 0 8px;
  background: linear-gradient(90deg, #666, #ccc 50%);
}

/* charts */
.charts {
  display: grid;
  grid-template-columns: 1fr 35px;
  row-gap: 2px;
  background: #cacaca;
  color: #000;
}
.weekly .charts {
  grid-template-columns: 1fr 47px;
}
.minutes .charts {
  grid-template-columns: 1fr 41px;
}
.plot {
  position: relative;
  min-width: 0;
  border: 1px solid #5a5a5a;
  background: #fff;
}
.plot path {
  fill: none;
}
.plot .grid {
  stroke: #e6e6e6;
  stroke-width: 3;
}
.plot .grid.strong {
  stroke: #d2d2d2;
}
.plot .level {
  stroke: #6496fa;
  stroke-width: 6;
  stroke-dasharray: 15 15;
}
.plot .wick,
.plot .flat {
  stroke: #000;
  stroke-width: 3;
  shape-rendering: crispEdges;
}
.plot .up,
.plot .down {
  stroke: #000;
  stroke-width: 3;
  shape-rendering: crispEdges;
}
.plot .up {
  fill: #1c1cf0;
}
.plot .down {
  fill: #b41c1c;
}
.plot .green {
  fill: #4fd44f;
}
.plot .red {
  fill: #dc6464;
}
.plot .average {
  stroke: #111;
  stroke-width: 3;
  stroke-dasharray: 12 9;
}
.plot .slow {
  stroke: #111;
  stroke-width: 3;
}
.plot .trend {
  stroke: #ff8246;
  stroke-width: 6;
}
.plot .vwap {
  stroke: #2f9a0a;
  stroke-width: 6;
}
.plot .macd {
  stroke: #3232dc;
  stroke-width: 3;
}
.plot .signal {
  stroke: #d85c5c;
  stroke-width: 3;
}
.plot .smooth {
  stroke: #e08080;
  stroke-width: 4;
  stroke-dasharray: 14 10;
}
.plot .bound {
  stroke: #2828c8;
  stroke-width: 3;
}
.plot .area-up {
  fill: #b4f0b4;
}
.plot .area-down {
  fill: #f4b0b4;
}
.plot .area-blue {
  fill: #b4b4dc;
}
.plot .area-pink {
  fill: #f8d2d2;
}
.level-note {
  position: absolute;
  left: 0;
  transform: translateY(-50%);
  color: #7aa2f8;
  font-weight: bold;
}
.credit {
  position: absolute;
  left: 2px;
  bottom: 0;
}
.credit em {
  margin-left: 2px;
}
.stamp {
  position: absolute;
  right: 6px;
  bottom: 5px;
  box-sizing: border-box;
  width: 82px;
  border: 1px solid #111;
  border-radius: 3px;
  background: #fff;
  color: #111;
  font: bold 16px/29px "Noto Sans", sans-serif;
  text-align: center;
}
.scale {
  position: relative;
}
.mark {
  position: absolute;
  left: 0;
  padding-left: 6px;
  transform: translateY(-50%);
  white-space: nowrap;
}
.mark::before {
  content: "";
  position: absolute;
  top: 6px;
  left: 0;
  width: 4px;
  height: 1px;
  background: #555;
}
.mark.strong {
  font-weight: bold;
}
.mark.tag {
  margin-left: 4px;
  padding: 0 1px;
  border: 1px solid #6a6a5a;
}
.mark.tag::before {
  left: -5px;
  background: #111;
}
.tag.last {
  background: #f8cc14;
}
.tag.vol {
  background: #fff;
  color: #3cc43c;
}
.mark.tag.left {
  border-color: #9be89b;
  background: #9be89b;
}
.tag.left::before,
.tag.vol::before {
  display: none;
}
.dates {
  grid-column: 1;
  position: relative;
  height: 19px;
  margin-top: -2px;
}
.hours .dates,
.minutes .dates {
  height: 18px;
}
.date {
  position: absolute;
  top: 5px;
  transform: translateX(-50%);
  white-space: nowrap;
}
.date::before {
  content: "";
  position: absolute;
  top: -5px;
  left: 50%;
  width: 1px;
  height: 4px;
  background: #555;
}
.date.strong {
  font-weight: bold;
}
.date.picked {
  padding: 0 1px;
  outline: 1px solid #555;
  background: #ffff14;
}

/* bottom bar */
.bar {
  display: flex;
  align-items: center;
  box-sizing: border-box;
  height: 34px;
  padding: 1px 5px 0 1px;
  border-top: 1px solid #000;
  box-shadow: inset 0 1px #4a4a4a;
  background: linear-gradient(#202020, #060606);
}
.weekly .bar {
  height: 31px;
  padding-top: 3px;
}
.hours .bar {
  height: 33px;
}
.share {
  width: 22px;
  height: 21px;
  border-radius: 3px;
  background: linear-gradient(#2079b4, #1a6ba4);
}
.link {
  display: flex;
  align-items: flex-end;
  width: 26px;
  margin: 0 5px 0 11px;
}
.daily .link {
  margin-left: 7px;
}
.link .symbol-icon {
  align-self: flex-start;
  margin-left: 2px;
}
.daily .tiny {
  margin-left: -8px;
}
.report {
  width: 13px;
  margin-right: 13px;
}
.weekly .report,
.hours .report,
.minutes .report {
  margin-left: -5px;
  margin-right: 14px;
}
.depth {
  width: 16px;
  margin-right: 7px;
}
.scroll {
  flex: 1;
  display: flex;
  box-sizing: border-box;
  height: 15px;
  margin-right: 7px;
  border: 1px solid #555;
  border-radius: 3px;
  background: #060606;
  overflow: hidden;
}
.scroll button {
  display: grid;
  place-items: center;
  width: 15px;
  background: linear-gradient(#333, #111);
}
.scroll button:first-child {
  border-right: 1px solid #666;
}
.scroll button:last-child {
  border-left: 1px solid #666;
}
.track {
  flex: 1;
  display: flex;
  justify-content: flex-end;
}
.thumb {
  display: grid;
  place-items: center;
  width: 9px;
  border-left: 1px solid #555;
  background: #1c1c1c;
}
.thumb.wide {
  width: 69px;
  margin-right: 20px;
  border-right: 1px solid #555;
}
.thumb i {
  width: 6px;
  height: 5px;
  border: solid #777;
  border-width: 1px 0;
  background: linear-gradient(transparent 2px, #777 2px, #777 3px, transparent 3px);
}
.bar > .scroll ~ button {
  flex: none;
  margin-right: 10px;
}
.bar > .scroll ~ button:last-child {
  margin-right: 0;
}
</style>
